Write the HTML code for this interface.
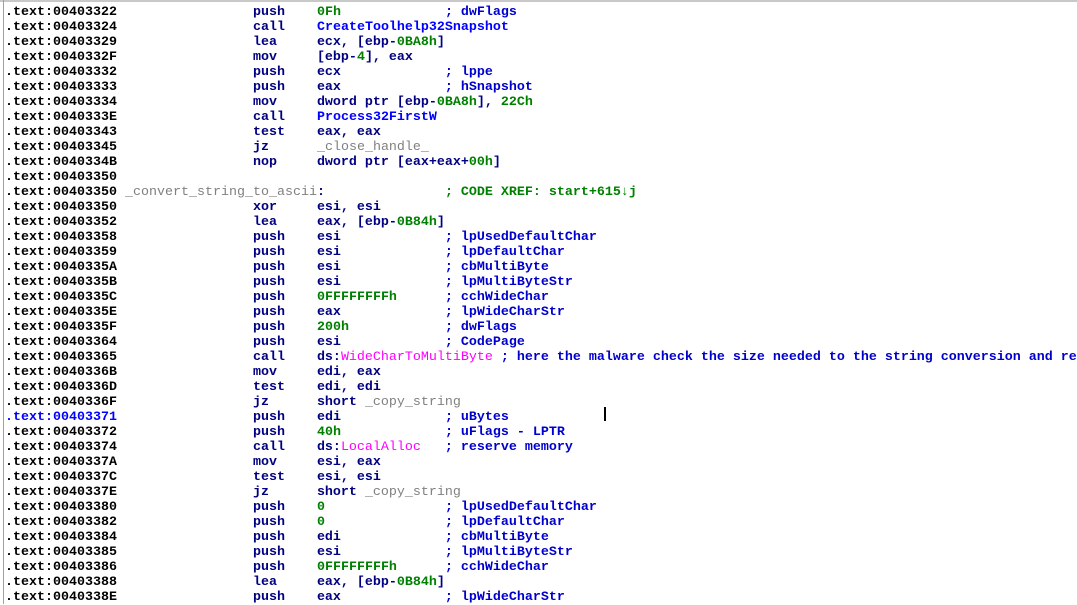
<!DOCTYPE html><html><head><style>
body{margin:0;width:1077px;height:604px;overflow:hidden;background:#fff;position:relative}
.top{position:absolute;left:0;top:0;width:1077px;height:2px;background:#c8c8c8}
.lb{position:absolute;left:3px;top:0;width:1px;height:604px;background:#a0a0a0}
pre{position:absolute;left:5px;top:5px;margin:0;font:bold 13.33px/15px "Liberation Mono",monospace;color:#000;white-space:pre}
.m{color:#000080}.n{color:#00f}.g{color:#008000}.c{color:#00c}.x{color:#808080;font-weight:normal}.p{color:#f0f;font-weight:normal}.a{color:#00f}
.cur{position:absolute;left:604px;top:407px;width:2px;height:14px;background:#000}
</style></head><body><div class="top"></div><div class="lb"></div><pre>.text:00403322                 <span class="m">push    <span class="g">0Fh</span>             <span class="c">; dwFlags</span></span>
.text:00403324                 <span class="m">call    <span class="n">CreateToolhelp32Snapshot</span></span>
.text:00403329                 <span class="m">lea     ecx, [ebp-<span class="g">0BA8h</span>]</span>
.text:0040332F                 <span class="m">mov     [ebp-<span class="g">4</span>], eax</span>
.text:00403332                 <span class="m">push    ecx             <span class="c">; lppe</span></span>
.text:00403333                 <span class="m">push    eax             <span class="c">; hSnapshot</span></span>
.text:00403334                 <span class="m">mov     dword ptr [ebp-<span class="g">0BA8h</span>], <span class="g">22Ch</span></span>
.text:0040333E                 <span class="m">call    <span class="n">Process32FirstW</span></span>
.text:00403343                 <span class="m">test    eax, eax</span>
.text:00403345                 <span class="m">jz      <span class="x">_close_handle_</span></span>
.text:0040334B                 <span class="m">nop     dword ptr [eax+eax+<span class="g">00h</span>]</span>
.text:00403350
.text:00403350 <span class="x">_convert_string_to_ascii</span><span class="m">:</span>               <span class="g">; CODE XREF: start+615↓j</span>
.text:00403350                 <span class="m">xor     esi, esi</span>
.text:00403352                 <span class="m">lea     eax, [ebp-<span class="g">0B84h</span>]</span>
.text:00403358                 <span class="m">push    esi             <span class="c">; lpUsedDefaultChar</span></span>
.text:00403359                 <span class="m">push    esi             <span class="c">; lpDefaultChar</span></span>
.text:0040335A                 <span class="m">push    esi             <span class="c">; cbMultiByte</span></span>
.text:0040335B                 <span class="m">push    esi             <span class="c">; lpMultiByteStr</span></span>
.text:0040335C                 <span class="m">push    <span class="g">0FFFFFFFFh</span>      <span class="c">; cchWideChar</span></span>
.text:0040335E                 <span class="m">push    eax             <span class="c">; lpWideCharStr</span></span>
.text:0040335F                 <span class="m">push    <span class="g">200h</span>            <span class="c">; dwFlags</span></span>
.text:00403364                 <span class="m">push    esi             <span class="c">; CodePage</span></span>
.text:00403365                 <span class="m">call    ds:<span class="p">WideCharToMultiByte</span> <span class="c">; here the malware check the size needed to the string conversion and re</span></span>
.text:0040336B                 <span class="m">mov     edi, eax</span>
.text:0040336D                 <span class="m">test    edi, edi</span>
.text:0040336F                 <span class="m">jz      short <span class="x">_copy_string</span></span>
<span class="a">.text:00403371</span>                 <span class="m">push    edi             <span class="c">; uBytes</span></span>
.text:00403372                 <span class="m">push    <span class="g">40h</span>             <span class="c">; uFlags - LPTR</span></span>
.text:00403374                 <span class="m">call    ds:<span class="p">LocalAlloc</span>   <span class="c">; reserve memory</span></span>
.text:0040337A                 <span class="m">mov     esi, eax</span>
.text:0040337C                 <span class="m">test    esi, esi</span>
.text:0040337E                 <span class="m">jz      short <span class="x">_copy_string</span></span>
.text:00403380                 <span class="m">push    <span class="g">0</span>               <span class="c">; lpUsedDefaultChar</span></span>
.text:00403382                 <span class="m">push    <span class="g">0</span>               <span class="c">; lpDefaultChar</span></span>
.text:00403384                 <span class="m">push    edi             <span class="c">; cbMultiByte</span></span>
.text:00403385                 <span class="m">push    esi             <span class="c">; lpMultiByteStr</span></span>
.text:00403386                 <span class="m">push    <span class="g">0FFFFFFFFh</span>      <span class="c">; cchWideChar</span></span>
.text:00403388                 <span class="m">lea     eax, [ebp-<span class="g">0B84h</span>]</span>
.text:0040338E                 <span class="m">push    eax             <span class="c">; lpWideCharStr</span></span></pre><div class="cur"></div></body></html>
